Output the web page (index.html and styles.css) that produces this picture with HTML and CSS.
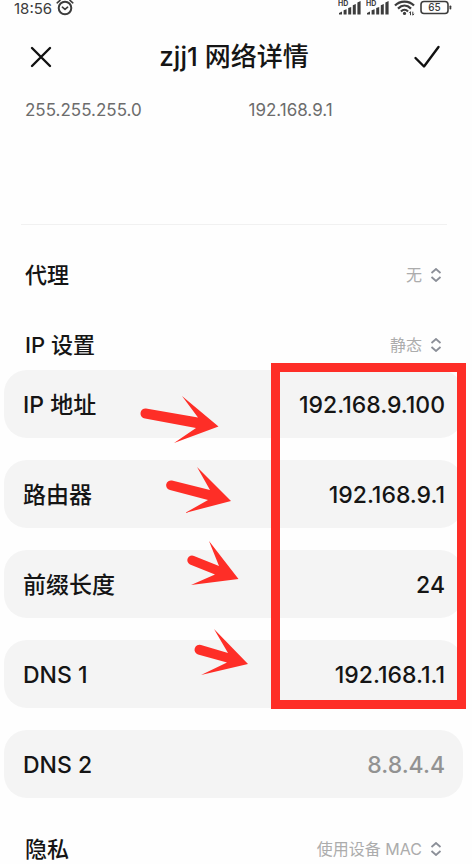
FILE: index.html
```html
<!DOCTYPE html>
<html lang="zh-CN">
<head>
    <meta charset="UTF-8">
    <meta name="viewport" content="width=device-width, initial-scale=1.0">
    <title>zjj1 网络详情</title>
    <link rel="stylesheet" href="styles.css">
</head>
<body>
    <div class="status-bar">
        <div class="status-time">
            <span>18:56</span>
            <svg width="20" height="16" viewBox="0 0 20 16" fill="none" stroke="#3c3c3c" stroke-width="2" stroke-linecap="round" stroke-linejoin="round">
                <circle cx="10" cy="8" r="6.3"/>
                <path d="M7.4 7.2L10 9.4L12.6 7.2M2.2 2.8L5 .4M17.8 2.8L15 .4" stroke-width="1.6"/>
            </svg>
        </div>
        <div class="status-icons">
            <svg width="24" height="16" viewBox="0 0 24 16" fill="#3c3c3c">
                <text class="hd" x="0" y="6">HD</text>
                <path d="M1 14.5v-1.6l3-1.4v3zM5.6 14.5v-4.2l3-1v5.2zM10.2 14.5v-6.4l3-1v7.4zM14.8 14.5v-9.2l3-1.2v10.4zM19.4 14.5v-12l3.2-1.5v13.5z"/>
            </svg>
            <svg width="24" height="16" viewBox="0 0 24 16" fill="#3c3c3c">
                <text class="hd" x="0" y="6">HD</text>
                <path d="M1 14.5v-1.6l3-1.4v3zM5.6 14.5v-4.2l3-1v5.2zM10.2 14.5v-6.4l3-1v7.4zM14.8 14.5v-9.2l3-1.2v10.4zM19.4 14.5v-12l3.2-1.5v13.5z"/>
            </svg>
            <svg width="22" height="16" viewBox="0 0 22 16" fill="none" stroke="#3c3c3c" stroke-width="2.2">
                <path d="M1 5.6C6 .2 15 .2 20 5.6M4 8.6C8 4.7 13 4.7 17 8.6M7 11.4C9 9.2 12 9.2 14 11.4"/>
                <circle cx="10.5" cy="13.4" r="1.6" fill="#3c3c3c" stroke="none"/>
                <path d="M16.5 15.2v-3.5l-1.2 1.4M18.8 11.7v3.5l1.2-1.4" stroke-width="1"/>
            </svg>
            <svg width="32" height="16" viewBox="0 0 32 16">
                <rect x="1" y="1.5" width="27" height="12" rx="3" fill="none" stroke="#3c3c3c" stroke-width="1.6"/>
                <rect x="29.5" y="5.5" width="1.8" height="4" rx=".8" fill="#3c3c3c"/>
                <text class="battery" x="14.5" y="11" text-anchor="middle">65</text>
            </svg>
        </div>
    </div>

    <header class="header">
        <button type="button" class="icon-btn" aria-label="关闭">
            <svg width="28" height="28" viewBox="0 0 28 28" fill="none" stroke="#111" stroke-width="2.4" stroke-linecap="round">
                <path d="M5 5L23 23M23 5L5 23"/>
            </svg>
        </button>
        <h1>zjj1 网络详情</h1>
        <button type="button" class="icon-btn" aria-label="确定">
            <svg width="28" height="28" viewBox="0 0 28 28" fill="none" stroke="#111" stroke-width="2.4" stroke-linecap="round" stroke-linejoin="round">
                <path d="M2.500 15L11 23.500L25.500 4"/>
            </svg>
        </button>
    </header>

    <form class="settings">
        <div class="info">
            <span>255.255.255.0</span>
            <span>192.168.9.1</span>
        </div>
        <hr>

        <div class="row">
            <label for="proxy">代理</label>
            <div class="picker">
                <select id="proxy"><option>无</option></select>
                <svg width="12" height="14" viewBox="0 0 12 14" fill="none" stroke="#8b8f98" stroke-width="1.8"><path d="M1.5 5L6 1L10.5 5M1.5 9L6 13L10.5 9"/></svg>
            </div>
        </div>
        <div class="row">
            <label for="ipMode">IP 设置</label>
            <div class="picker">
                <select id="ipMode"><option>静态</option></select>
                <svg width="12" height="14" viewBox="0 0 12 14" fill="none" stroke="#8b8f98" stroke-width="1.8"><path d="M1.5 5L6 1L10.5 5M1.5 9L6 13L10.5 9"/></svg>
            </div>
        </div>

        <div class="fields">
            <div class="marked">
                <div class="field">
                    <label for="ip">IP 地址</label>
                    <input type="text" id="ip" value="192.168.9.100">
                </div>
                <div class="field">
                    <label for="router">路由器</label>
                    <input type="text" id="router" value="192.168.9.1">
                </div>
                <div class="field">
                    <label for="prefix">前缀长度</label>
                    <input type="text" id="prefix" value="24">
                </div>
                <div class="field">
                    <label for="dns1">DNS 1</label>
                    <input type="text" id="dns1" value="192.168.1.1">
                </div>

                <svg class="arrows" width="260" height="340" viewBox="0 0 260 340" fill="#fe2e27" aria-hidden="true">
                    <path d="M146 38.5L198 47.5L182 26L218.5 56.5L174 73L196 58L145 48.500A5 5 0 0 1 146 38.5Z"/>
                    <path d="M172 110.500L210 120L197 97L231 131L185 143L208 130L170 120A4.8 4.8 0 0 1 172 110.500Z"/>
                    <path d="M194 186L219 196L209 171L238.5 209L191 215L215 204.5L190 194.500A4.6 4.6 0 0 1 194 186Z"/>
                    <path d="M201 275L228 283L214 259L248 294L201 305L227 292.500L198 284.500A4.9 4.9 0 0 1 201 275Z"/>
                </svg>
                <div class="red-box"></div>
            </div>
            <div class="field">
                <label for="dns2">DNS 2</label>
                <input type="text" id="dns2" placeholder="8.8.4.4">
            </div>
        </div>

        <div class="row">
            <label for="privacy">隐私</label>
            <div class="picker">
                <select id="privacy"><option>使用设备 MAC</option></select>
                <svg width="12" height="14" viewBox="0 0 12 14" fill="none" stroke="#8b8f98" stroke-width="1.8"><path d="M1.5 5L6 1L10.5 5M1.5 9L6 13L10.5 9"/></svg>
            </div>
        </div>
    </form>
</body>
</html>
```
FILE: styles.css
```css
* {
    box-sizing: border-box;
}
body {
    margin: 0;
    background-color: #fefefe;
    color: #151515;
    font-family: Inter, "Noto Sans CJK SC", sans-serif;
}
svg {
    display: block;
}
.status-bar {
    display: flex;
    justify-content: space-between;
    height: 16px;
    padding: 0 20px 0 14px;
    color: #3c3c3c;
}
.status-time {
    display: flex;
    gap: 3px;
    font-size: 15px;
    line-height: 18px;
}
.status-icons {
    display: flex;
    gap: 4px;
}
.hd {
    font-size: 7px;
    font-weight: 700;
}
.battery {
    font-size: 10px;
    font-weight: 500;
    fill: #3c3c3c;
}
.header {
    display: flex;
    align-items: center;
    justify-content: space-between;
    height: 82px;
    padding: 0 31px 0 27px;
}
.header h1 {
    margin: 0;
    font-size: 26px;
    font-weight: 500;
    line-height: 36px;
}
.icon-btn {
    padding: 0;
    border: none;
    background: none;
    cursor: pointer;
}
.info {
    display: grid;
    grid-template-columns: 1fr 1fr;
    padding: 0 0 0 25px;
    font-size: 17px;
    line-height: 24px;
    color: #6c6c6c;
}
hr {
    height: 1px;
    margin: 102px 25px 35px 21px;
    border: none;
    background-color: #f1f1f1;
}
.row {
    display: flex;
    align-items: center;
    justify-content: space-between;
    height: 30px;
    padding: 0 30px 0 25px;
}
.row + .row {
    margin-top: 40px;
}
label {
    font-size: 22px;
    font-weight: 500;
    line-height: 30px;
}
.picker {
    display: flex;
    align-items: center;
    gap: 8px;
}
select {
    appearance: none;
    padding: 0;
    border: none;
    background: none;
    color: #acacac;
    font-family: inherit;
    font-size: 16px;
    text-align: right;
}
.fields {
    display: grid;
    gap: 22px;
    margin: 10px 0 36px;
}
.marked {
    position: relative;
    display: grid;
    gap: 22px;
}
.field {
    display: flex;
    align-items: center;
    height: 68px;
    margin: 0 9px 0 4px;
    padding: 2px 18px 0 19px;
    border-radius: 23px;
    background-color: #f4f4f4;
}
.field label {
    font-size: 23px;
}
.field input {
    flex: 1;
    min-width: 0;
    padding: 0;
    border: none;
    outline: none;
    background: none;
    color: #151515;
    font-family: inherit;
    font-size: 23px;
    font-weight: 500;
    text-align: right;
}
.field input::placeholder {
    color: #929292;
}
.arrows {
    position: absolute;
    top: 0;
    left: 0;
}
.red-box {
    position: absolute;
    top: -7px;
    right: 6px;
    bottom: -1px;
    width: 195px;
    border: 9px solid #fe2e27;
    pointer-events: none;
}
```
